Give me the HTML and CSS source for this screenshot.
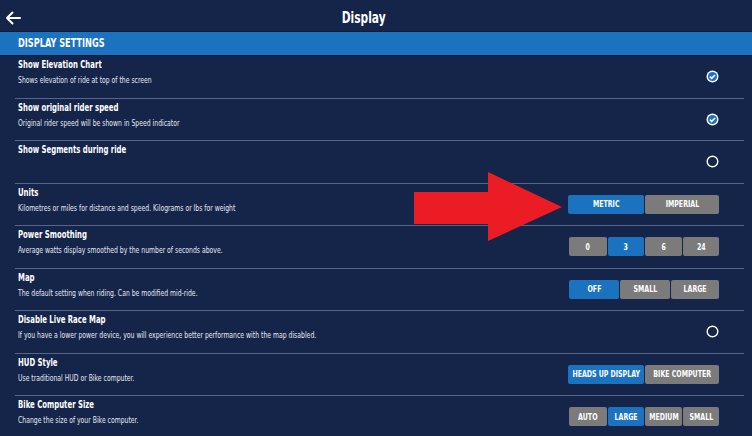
FILE: index.html
```html
<!DOCTYPE html>
<html>
<head>
<meta charset="utf-8">
<link rel="stylesheet" href="styles.css">
</head>
<body>
<header class="topbar">
  <span class="back">
    <svg width="16" height="14" viewBox="0 0 16 14"><path d="M15 7H2M7.5 1.5L2 7l5.5 5.5" fill="none" stroke="#fff" stroke-width="2" stroke-linecap="round" stroke-linejoin="round"/></svg>
  </span>
  <h1 class="title">Display</h1>
</header>
<div class="section"><span class="sx">DISPLAY SETTINGS</span></div>
<ul class="settings">
  <li class="row">
    <div class="info"><div class="name">Show Elevation Chart</div><div class="desc">Shows elevation of ride at top of the screen</div></div>
    <span class="check on"><svg width="13" height="13" viewBox="0 0 13 13"><circle cx="6.5" cy="6.5" r="6" fill="#fff"/><circle cx="6.5" cy="6.5" r="4.6" fill="#1b72bf"/><path d="M3.9 6.6l1.8 1.8 3.4-3.4" fill="none" stroke="#fff" stroke-width="1.6"/></svg></span>
  </li>
  <li class="row">
    <div class="info"><div class="name">Show original rider speed</div><div class="desc">Original rider speed will be shown in Speed indicator</div></div>
    <span class="check on"><svg width="13" height="13" viewBox="0 0 13 13"><circle cx="6.5" cy="6.5" r="6" fill="#fff"/><circle cx="6.5" cy="6.5" r="4.6" fill="#1b72bf"/><path d="M3.9 6.6l1.8 1.8 3.4-3.4" fill="none" stroke="#fff" stroke-width="1.6"/></svg></span>
  </li>
  <li class="row">
    <div class="info"><div class="name">Show Segments during ride</div></div>
    <span class="check"><svg width="13" height="13" viewBox="0 0 13 13"><circle cx="6.5" cy="6.5" r="5.3" fill="none" stroke="#fff" stroke-width="1.4"/></svg></span>
  </li>
  <li class="row">
    <div class="info"><div class="name">Units</div><div class="desc">Kilometres or miles for distance and speed. Kilograms or lbs for weight</div></div>
    <div class="seg"><span class="opt active w76"><span>METRIC</span></span><span class="opt w74"><span>IMPERIAL</span></span></div>
  </li>
  <li class="row">
    <div class="info"><div class="name">Power Smoothing</div><div class="desc">Average watts display smoothed by the number of seconds above.</div></div>
    <div class="seg"><span class="opt w38"><span>0</span></span><span class="opt active w36"><span>3</span></span><span class="opt w37"><span>6</span></span><span class="opt w36"><span>24</span></span></div>
  </li>
  <li class="row">
    <div class="info"><div class="name">Map</div><div class="desc">The default setting when riding. Can be modified mid-ride.</div></div>
    <div class="seg"><span class="opt active w50"><span>OFF</span></span><span class="opt w50"><span>SMALL</span></span><span class="opt w48"><span>LARGE</span></span></div>
  </li>
  <li class="row">
    <div class="info"><div class="name">Disable Live Race Map</div><div class="desc">If you have a lower power device, you will experience better performance with the map disabled.</div></div>
    <span class="check"><svg width="13" height="13" viewBox="0 0 13 13"><circle cx="6.5" cy="6.5" r="5.3" fill="none" stroke="#fff" stroke-width="1.4"/></svg></span>
  </li>
  <li class="row">
    <div class="info"><div class="name">HUD Style</div><div class="desc">Use traditional HUD or Bike computer.</div></div>
    <div class="seg"><span class="opt active w76"><span>HEADS UP DISPLAY</span></span><span class="opt w74"><span>BIKE COMPUTER</span></span></div>
  </li>
  <li class="row">
    <div class="info"><div class="name">Bike Computer Size</div><div class="desc">Change the size of your Bike computer.</div></div>
    <div class="seg"><span class="opt w38"><span>AUTO</span></span><span class="opt active w36"><span>LARGE</span></span><span class="opt w37"><span>MEDIUM</span></span><span class="opt w36"><span>SMALL</span></span></div>
  </li>
</ul>
<svg class="arrow" width="150" height="70" viewBox="0 0 150 70"><polygon points="0,20 74,20 74,0 148,35 74,69 74,52 0,52" fill="#ec1c24"/></svg>
</body>
</html>
```
FILE: styles.css
```css
* { box-sizing: border-box; }
html, body { margin: 0; padding: 0; }
body {
  width: 752px;
  height: 436px;
  overflow: hidden;
  background: #15254a;
  color: #fff;
  font-family: "DejaVu Sans Condensed", "Liberation Sans", sans-serif;
  position: relative;
}
.topbar {
  height: 32px;
  display: flex;
  align-items: center;
  justify-content: center;
  position: relative;
  border-bottom: 1px solid #0f1c3a;
  padding-top: 3px;
}
.back {
  position: absolute;
  left: 5px;
  top: 11px;
  display: flex;
}
.title {
  margin: 0 0 0 -24px;
  font-size: 16px;
  font-weight: bold;
  transform: scaleX(0.74);
}
.section {
  height: 24px;
  background: #1b72bf;
  padding-left: 18px;
  font-size: 13px;
  font-weight: bold;
  line-height: 22px;
  border-bottom: 1px solid #0f1c3a;
}
.sx {
  display: inline-block;
  transform: scaleX(0.7);
  transform-origin: left center;
}
.settings {
  list-style: none;
  margin: 0 8px 0 15px;
  padding: 0;
}
.row {
  height: 42.5px;
  border-bottom: 1px solid #56668a;
  display: flex;
  align-items: center;
  justify-content: space-between;
  padding: 0 25px 0 3px;
  position: relative;
}
.info {
  align-self: flex-start;
  padding-top: 2px;
}
.name {
  font-size: 11px;
  font-weight: bold;
  line-height: 14px;
  transform: scaleX(0.7);
  transform-origin: left center;
  white-space: nowrap;
}
.desc {
  font-size: 8.5px;
  line-height: 12px;
  margin-top: 2px;
  color: #e6e9f0;
  white-space: nowrap;
  transform: scaleX(0.8);
  transform-origin: left center;
}
.check {
  display: flex;
}
.seg {
  display: flex;
  gap: 1px;
  height: 19px;
}
.opt {
  background: #7b7b7b;
  display: flex;
  align-items: center;
  justify-content: center;
  font-size: 8.5px;
  font-weight: bold;
  border-radius: 2px;
  white-space: nowrap;
}
.opt span {
  display: inline-block;
  transform: scaleX(0.82);
}
.opt.active { background: #1b72bf; }
.w76 { width: 76px; }
.w74 { width: 74px; }
.w38 { width: 38px; }
.w37 { width: 37px; }
.w36 { width: 36px; }
.w50 { width: 50px; }
.w48 { width: 48px; }
.arrow {
  position: absolute;
  left: 414px;
  top: 172px;
}
```
